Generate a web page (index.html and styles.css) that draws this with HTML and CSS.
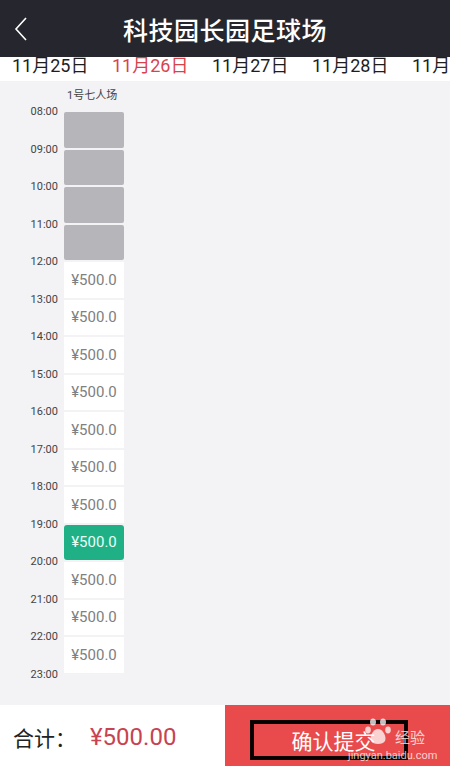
FILE: index.html
```html
<!DOCTYPE html>
<html lang="zh-CN">
<head>
    <meta charset="UTF-8">
    <meta name="viewport" content="width=device-width, initial-scale=1.0">
    <title>科技园长园足球场</title>
    <link rel="stylesheet" href="styles.css">
</head>
<body>
    <header class="topbar">
        <svg class="back" width="14" height="24" viewBox="0 0 14 24">
            <path d="M12 1 L2 12 L12 23" fill="none" stroke="#fff" stroke-width="1.6"/>
        </svg>
        <h1>科技园长园足球场</h1>
    </header>

    <div class="dates">
        <div class="date-row">
            <span>11月25日</span>
            <span class="active">11月26日</span>
            <span>11月27日</span>
            <span>11月28日</span>
            <span>11月29日</span>
        </div>
    </div>

    <main class="board">
        <div class="court">1号七人场</div>
        <div class="timeline">
            <div class="times">
                <span>08:00</span><span>09:00</span><span>10:00</span><span>11:00</span>
                <span>12:00</span><span>13:00</span><span>14:00</span><span>15:00</span>
                <span>16:00</span><span>17:00</span><span>18:00</span><span>19:00</span>
                <span>20:00</span><span>21:00</span><span>22:00</span><span>23:00</span>
            </div>
            <div class="slots">
                <div class="slot booked"></div>
                <div class="slot booked"></div>
                <div class="slot booked"></div>
                <div class="slot booked"></div>
                <div class="slot">¥500.0</div>
                <div class="slot">¥500.0</div>
                <div class="slot">¥500.0</div>
                <div class="slot">¥500.0</div>
                <div class="slot">¥500.0</div>
                <div class="slot">¥500.0</div>
                <div class="slot">¥500.0</div>
                <div class="slot picked">¥500.0</div>
                <div class="slot">¥500.0</div>
                <div class="slot">¥500.0</div>
                <div class="slot">¥500.0</div>
            </div>
        </div>
    </main>

    <footer class="bottombar">
        <div class="total">
            <span class="total-label">合计：</span>
            <span class="total-price">¥500.00</span>
        </div>
        <button class="submit">
            <span class="mark">确认提交</span>
            <span class="watermark">
                <svg class="paw" width="26" height="28" viewBox="0 0 26 28">
                    <g fill="rgba(255,255,255,0.75)">
                        <ellipse cx="8" cy="4" rx="3" ry="3.6"/>
                        <ellipse cx="18" cy="4" rx="3" ry="3.6"/>
                        <ellipse cx="3" cy="12" rx="2.8" ry="3.4"/>
                        <ellipse cx="23" cy="12" rx="2.8" ry="3.4"/>
                        <path d="M13 11 C8 11 4 19 6 23 C8 27 18 27 20 23 C22 19 18 11 13 11 Z"/>
                    </g>
                </svg>
                <span class="wm-word">经验</span>
                <span class="wm-url">jingyan.baidu.com</span>
            </span>
        </button>
    </footer>
</body>
</html>
```

FILE: styles.css
```css
/* General */
* {
    box-sizing: border-box;
}

body {
    margin: 0;
    width: 450px;
    height: 766px;
    display: flex;
    flex-direction: column;
    font-family: Roboto, "Noto Sans CJK SC", sans-serif;
    background: #fff;
    overflow: hidden;
}

/* Top bar */
.topbar {
    height: 57px;
    flex: none;
    background: #26272e;
    display: flex;
    align-items: center;
    justify-content: center;
    position: relative;
    z-index: 1;
}

.back {
    position: absolute;
    left: 14px;
    top: 17px;
}

.topbar h1 {
    margin: 0;
    color: #fff;
    font-size: 25px;
    font-weight: 500;
    letter-spacing: 0.5px;
}

/* Date strip */
.dates {
    height: 24px;
    flex: none;
    overflow: hidden;
    background: #fff;
}

.date-row {
    display: flex;
    gap: 24px;
    padding-left: 12px;
    margin-top: -2px;
    white-space: nowrap;
}

.date-row span {
    width: 76px;
    flex: none;
    font-size: 18px;
    line-height: 22px;
    color: #1e1e1e;
}

.date-row .active {
    color: #d8434b;
}

/* Booking board */
.board {
    flex: 1;
    background: #f3f2f4;
    padding: 8px 0 0 0;
}

.court {
    margin-left: 67px;
    font-size: 11px;
    line-height: 14px;
    color: #444;
}

.timeline {
    display: flex;
    gap: 6px;
    margin-top: 9px;
}

.times {
    width: 58px;
    display: flex;
    flex-direction: column;
    align-items: flex-end;
    margin-top: -7px;
}

.times span {
    height: 37.5px;
    line-height: 14px;
    font-size: 11px;
    color: #444;
}

.slots {
    width: 60px;
    display: flex;
    flex-direction: column;
}

.slot {
    height: 35.5px;
    margin-bottom: 2px;
    background: #fff;
    color: #808080;
    font-size: 15px;
    display: flex;
    align-items: center;
    justify-content: center;
}

.slot.booked {
    background: #b6b5ba;
    border-radius: 2px;
}

.slot.picked {
    background: #20b086;
    color: #e6fff6;
    border-radius: 3px;
}

/* Bottom bar */
.bottombar {
    height: 63px;
    flex: none;
    display: flex;
    background: #fff;
}

.total {
    flex: 1;
    display: flex;
    align-items: center;
    padding-left: 13px;
}

.total-label {
    font-size: 21px;
    color: #222;
    width: 77px;
}

.total-price {
    font-size: 24px;
    color: #c8434f;
}

.submit {
    width: 225px;
    border: none;
    margin: 0;
    padding: 0 0 0 6px;
    background: #e94b4c;
    display: flex;
    align-items: center;
    justify-content: center;
    position: relative;
    font-family: inherit;
}

.mark {
    width: 158px;
    height: 40px;
    margin-right: 24px;
    margin-top: 6px;
    border: 4px solid #0b0000;
    display: flex;
    align-items: center;
    justify-content: center;
    color: #fff;
    font-size: 21px;
    padding-left: 10px;
}

/* Watermark over the button */
.watermark {
    position: absolute;
    left: 110px;
    top: 10px;
    width: 110px;
    height: 50px;
}

.paw {
    position: absolute;
    left: 30px;
    top: 3px;
}

.wm-word {
    position: absolute;
    left: 60px;
    top: 11px;
    font-size: 15px;
    color: rgba(255, 255, 255, 0.75);
}

.wm-url {
    position: absolute;
    left: 13px;
    top: 34px;
    font-size: 11px;
    color: rgba(255, 255, 255, 0.75);
}
```
